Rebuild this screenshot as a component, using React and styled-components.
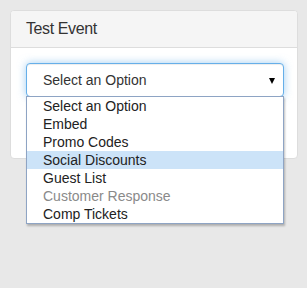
import React from "react";
import styled, { createGlobalStyle } from "styled-components";

const GlobalStyle = createGlobalStyle`
  html, body {
    margin: 0;
    padding: 0;
    background: #e8e8e8;
    font-family: "Liberation Sans", Arial, sans-serif;
  }
`;

const Page = styled.div`
  width: 307px;
  height: 288px;
  padding: 10px 0 0 10px;
  box-sizing: border-box;
`;

const Panel = styled.div`
  width: 288px;
  background: #fff;
  border: 1px solid #dddddd;
  border-radius: 4px;
  box-sizing: border-box;
`;

const Heading = styled.div`
  height: 37px;
  padding: 0 15px;
  background: #f5f5f5;
  border-bottom: 1px solid #dddddd;
  border-radius: 3px 3px 0 0;
  display: flex;
  align-items: center;
  box-sizing: border-box;
`;

const Title = styled.h3`
  margin: 0;
  font-size: 16px;
  font-weight: normal;
  letter-spacing: -0.4px;
  color: #333;
`;

const Body = styled.div`
  padding: 15px 14px 0 15px;
  height: 110px;
  box-sizing: border-box;
`;

const SelectWrap = styled.div`
  position: relative;
  width: 258px;
`;

const SelectBox = styled.div`
  height: 34px;
  border: 1px solid #66afe9;
  border-radius: 4px;
  box-shadow: inset 0 1px 1px rgba(0, 0, 0, 0.075), 0 0 8px rgba(102, 175, 233, 0.6);
  background: #fff;
  display: flex;
  align-items: center;
  justify-content: space-between;
  padding: 0 8px 0 16px;
  box-sizing: border-box;
  font-size: 14px;
  color: #333;
`;

const Arrow = styled.span`
  width: 0;
  height: 0;
  border-left: 3.5px solid transparent;
  border-right: 3.5px solid transparent;
  border-top: 6px solid #000;
  margin-top: 1px;
`;

const List = styled.ul`
  position: absolute;
  top: 33px;
  left: 0;
  width: 258px;
  margin: 0;
  padding: 0;
  list-style: none;
  background: #fff;
  border: 1px solid #8ea4c4;
  box-shadow: 1px 2px 2px rgba(0, 0, 0, 0.25);
  box-sizing: border-box;
  z-index: 2;
`;

const Option = styled.li`
  height: 18px;
  line-height: 18px;
  padding-left: 16px;
  font-size: 14px;
  color: ${(p) => (p.$disabled ? "#8a8a8a" : "#222")};
  background: ${(p) => (p.$active ? "#cce3f8" : "transparent")};
`;

const options = [
  { label: "Select an Option" },
  { label: "Embed" },
  { label: "Promo Codes" },
  { label: "Social Discounts", active: true },
  { label: "Guest List" },
  { label: "Customer Response", disabled: true },
  { label: "Comp Tickets" },
];

export default function App() {
  return (
    <Page>
      <GlobalStyle />
      <Panel>
        <Heading>
          <Title>Test Event</Title>
        </Heading>
        <Body>
          <SelectWrap>
            <SelectBox>
              <span>Select an Option</span>
              <Arrow />
            </SelectBox>
            <List>
              {options.map((o) => (
                <Option key={o.label} $active={o.active} $disabled={o.disabled}>
                  {o.label}
                </Option>
              ))}
            </List>
          </SelectWrap>
        </Body>
      </Panel>
    </Page>
  );
}
